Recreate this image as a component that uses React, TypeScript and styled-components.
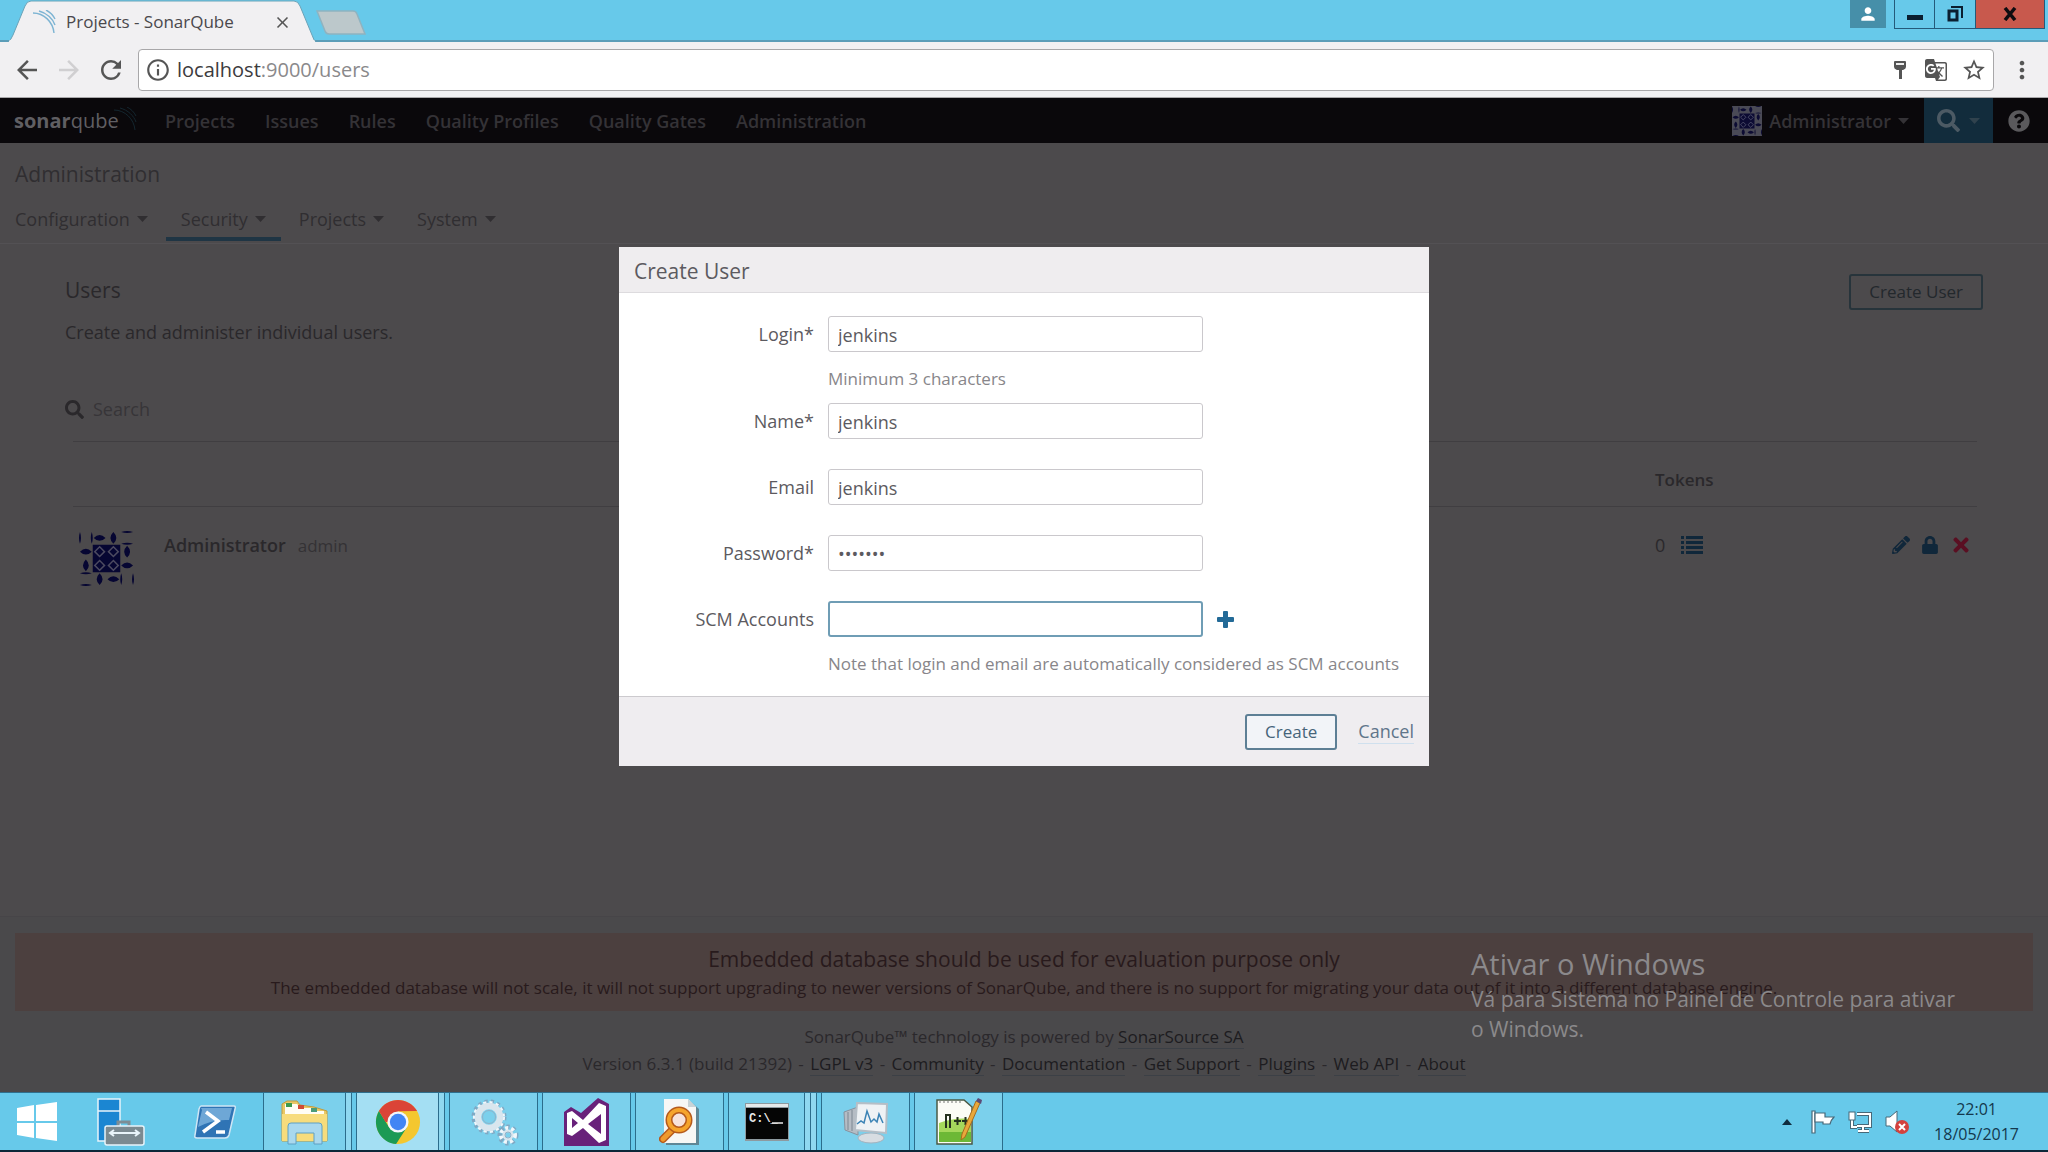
import React from 'react';
import styled, { createGlobalStyle, css } from 'styled-components';
import { FaLock, FaPencilAlt, FaQuestionCircle, FaSearch, FaTimes } from 'react-icons/fa';
import {
  MdArrowBack,
  MdArrowForward,
  MdClose,
  MdGTranslate,
  MdInfoOutline,
  MdMoreVert,
  MdPerson,
  MdRefresh,
  MdStarBorder,
} from 'react-icons/md';

const ui = "'Open Sans', 'Noto Sans', sans-serif";

const color = {
  sky: '#67c9ea',
  toolbar: '#f1f0f2',
  page: '#4c4a4c',
  footer: '#4a494b',
  ink: '#2a282b',
  faint: '#343235',
  navy: '#10273a',
};

const GlobalStyle = createGlobalStyle`
  *, *::before, *::after { box-sizing: border-box; }
  body { margin: 0; font-family: ${ui}; font-size: 18px; line-height: 28px; }
  h1, h2, h3, p { margin: 0; font-weight: 400; }
  button, input { font: inherit; margin: 0; }
  button { padding: 0; border: 0; background: none; color: inherit; }
  a { color: inherit; text-decoration: none; }
  svg { display: block; flex: none; }
`;

const Screen = styled.div`
  display: flex;
  flex-direction: column;
  min-height: 100vh;
`;

/* ---------- browser window ---------- */

const TabStrip = styled.header`
  display: flex;
  align-items: flex-end;
  height: 42px;
  padding-left: 8px;
  background: ${color.sky};
  box-shadow: inset 0 -2px 0 #5b9db8;
`;

const Tab = styled.div`
  position: relative;
  display: flex;
  align-items: center;
  width: 308px;
  height: 42px;
  padding: 2px 24px 0;
`;

const TabShape = styled.svg`
  position: absolute;
  inset: 0;
`;

const TabLabel = styled.div`
  position: relative;
  display: flex;
  flex: 1;
  align-items: center;
  gap: 10px;
  color: #4a484c;
  font-size: 17px;
`;

const TabClose = styled.button`
  margin-left: auto;
  color: #555;
`;

const NewTab = styled.button`
  align-self: flex-start;
  margin-top: 10px;
`;

const WindowControls = styled.div`
  display: flex;
  align-items: flex-start;
  align-self: flex-start;
  margin-left: auto;
  padding-right: 3px;
`;

const ProfileButton = styled.button`
  display: grid;
  place-items: center;
  width: 36px;
  height: 28px;
  margin-right: 8px;
  background: #468fa9;
  color: #fff;
`;

const WindowButton = styled.button<{ $close?: boolean }>`
  display: grid;
  place-items: center;
  width: ${(p) => (p.$close ? 69 : 41)}px;
  height: 29px;
  border: solid #245a7a;
  border-width: 0 1px 1px 0;
  background: ${(p) => (p.$close ? '#c8594d' : 'transparent')};
  &:nth-of-type(2) { border-left-width: 1px; }
`;

const Toolbar = styled.div`
  display: flex;
  align-items: center;
  height: 56px;
  padding: 0 12px;
  background: ${color.toolbar};
  border-bottom: 1px solid #a9a8aa;
  color: #555;
`;

const ToolButton = styled.button<{ $muted?: boolean }>`
  display: grid;
  place-items: center;
  width: 42px;
  color: ${(p) => (p.$muted ? '#d0cfd1' : '#555')};
  &:first-child { width: 30px; margin-right: 6px; }
`;

const Omnibox = styled.div`
  display: flex;
  flex: 1;
  align-items: center;
  gap: 6px;
  height: 42px;
  margin: 0 14px 0 6px;
  padding: 0 6px;
  border: 1px solid #a8a7a9;
  border-radius: 4px;
  background: #fff;
`;

const Address = styled.span`
  flex: 1;
  color: #8a898b;
  font-size: 20px;
`;

const Host = styled.span`
  color: #3c3b3d;
`;

const OmniIcons = styled.div`
  display: flex;
  align-items: center;
  gap: 13px;
`;

/* ---------- SonarQube page ---------- */

const Page = styled.div`
  position: relative;
  display: flex;
  flex: 1;
  flex-direction: column;
  background: ${color.page};
  color: ${color.ink};
`;

const GlobalNav = styled.nav`
  display: flex;
  align-items: center;
  height: 45px;
  background: #0a080b;
  color: #343236;
  font-weight: 600;
`;

const Logo = styled.a`
  display: flex;
  width: 150px;
  padding-left: 14px;
  color: #605f63;
  font-size: 20px;
  font-weight: 400;
`;

const LogoBold = styled.b`
  font-weight: 700;
`;

const LogoMark = styled.span`
  margin-left: -6px;
`;

const NavLink = styled.a`
  padding: 0 15px;
`;

const NavRight = styled.div`
  display: flex;
  align-items: center;
  align-self: stretch;
  margin-left: auto;
`;

const UserMenu = styled.button`
  display: flex;
  align-items: center;
  gap: 7px;
  margin-right: 15px;
`;

const SearchMenu = styled.button`
  display: flex;
  align-items: center;
  align-self: stretch;
  gap: 9px;
  width: 69px;
  padding-left: 13px;
  background: #122c3c;
  color: #4c5a64;
`;

const HelpButton = styled.button`
  width: 55px;
  padding-left: 15px;
  color: #5a595c;
`;

const ContextNav = styled.nav`
  padding-top: 16px;
  border-bottom: 1px solid #535154;
`;

const ContextTitle = styled.h1`
  padding-left: 15px;
  color: #302e31;
  font-size: 21px;
  line-height: 30px;
`;

const TabRow = styled.div`
  display: flex;
  gap: 3px;
  padding: 11px 0 2px;
`;

const MenuTab = styled.button<{ $active?: boolean }>`
  display: flex;
  align-items: center;
  gap: 7px;
  height: 41px;
  padding: 0 15px;
  border-bottom: 4px solid ${(p) => (p.$active ? '#1f3544' : 'transparent')};
  color: #302e31;
`;

const Main = styled.main`
  flex: 1;
  padding: 30px 65px 0;
`;

const PageHeader = styled.div`
  display: flex;
  justify-content: space-between;
  align-items: flex-start;
`;

const Heading = styled.h2`
  font-size: 21px;
  line-height: 32px;
`;

const Description = styled.p`
  margin-top: 8px;
`;

const Button = styled.button<{ $dim?: boolean }>`
  height: 36px;
  padding: 0 18px;
  border: 2px solid ${(p) => (p.$dim ? '#27343b' : '#5d7f95')};
  border-radius: 3px;
  background: ${(p) => (p.$dim ? 'transparent' : '#f2f4f8')};
  color: ${(p) => (p.$dim ? '#23282c' : '#46647a')};
  font-size: 17px;
  font-weight: 500;
  line-height: 32px;
`;

const SearchRow = styled.label`
  display: flex;
  align-items: center;
  gap: 9px;
  margin-top: 49px;
`;

const SearchInput = styled.input`
  flex: 1;
  height: 28px;
  padding: 0;
  border: 0;
  outline: 0;
  background: transparent;
  font-size: 18px;
  &::placeholder { color: #373538; opacity: 1; }
`;

const TableWrap = styled.div`
  margin: 18px 6px 0 8px;
`;

const Table = styled.table`
  width: 100%;
  border-collapse: collapse;
  border-top: 1px solid #403e41;
  text-align: left;
  th { padding: 24px 8px 12px; border-bottom: 1px solid #403e41; font-size: 17px; font-weight: 600; }
  td { padding: 24px 8px 0; vertical-align: top; }
  td:first-child { width: 83px; padding-left: 6px; }
  th:nth-child(3) { width: 218px; }
  td:last-child { width: 112px; padding-right: 5px; }
`;

const UserName = styled.strong`
  font-weight: 600;
`;

const UserLogin = styled.span`
  margin-left: 12px;
  color: #343235;
  font-size: 17px;
`;

const CellIcons = styled.div<{ $gap: number; $end?: boolean }>`
  display: flex;
  align-items: center;
  justify-content: ${(p) => (p.$end ? 'flex-end' : 'flex-start')};
  gap: ${(p) => p.$gap}px;
  height: 28px;
  color: ${color.navy};
`;

const Count = styled.span`
  color: ${color.ink};
`;

const DeleteButton = styled.button`
  color: #5a0f22;
`;

const Footer = styled.footer`
  padding: 16px 15px 15px;
  background: ${color.footer};
  text-align: center;
  font-size: 17px;
  line-height: 27px;
  border-top: 1px solid #474548;
`;

const Alert = styled.div`
  margin-bottom: 12px;
  padding: 11px 0 9px;
  background: #4c403f;
  color: #281a1c;
  line-height: 28px;
`;

const AlertTitle = styled.h3`
  font-size: 21px;
  line-height: 30px;
`;

const FootLink = styled.a`
  border-bottom: 1px solid #3c4046;
  color: #1d1c20;
`;

const Dash = styled.span`
  padding: 0 2px;
`;

/* ---------- dialog ---------- */

const Backdrop = styled.div`
  position: absolute;
  inset: 0;
  display: flex;
  justify-content: center;
  align-items: flex-start;
  padding-top: 149px;
`;

const Dialog = styled.form`
  width: 810px;
  background: #fff;
  color: #5c5a60;
`;

const DialogTitle = styled.h2`
  padding: 6px 15px 3px;
  border-bottom: 1px solid #dddbde;
  background: #efedef;
  font-size: 21px;
  line-height: 36px;
`;

const DialogBody = styled.div`
  padding: 23px 0 8px;
`;

const Field = styled.div`
  display: grid;
  grid-template-columns: 195px 375px auto;
  column-gap: 14px;
  justify-content: start;
  align-content: start;
  align-items: center;
  min-height: 66px;
  padding-bottom: 11px;
`;

const FieldLabel = styled.label`
  text-align: right;
`;

const TextInput = styled.input<{ $active?: boolean }>`
  width: 100%;
  height: 36px;
  padding: 2px 9px 0;
  border: 1px solid #cac8cc;
  border-radius: 3px;
  outline: 0;
  background: #fff;
  color: #5c5a60;
  ${(p) => p.$active && css`border: 2px solid #6f9db5;`}
`;

const AddButton = styled.button`
  color: #236a97;
`;

const Note = styled.p`
  grid-column: 2 / -1;
  width: 0;
  margin-top: 14px;
  color: #88868a;
  font-size: 17px;
  line-height: 26px;
  white-space: nowrap;
`;

const DialogFooter = styled.div`
  display: flex;
  justify-content: flex-end;
  align-items: center;
  gap: 21px;
  height: 70px;
  padding-right: 15px;
  border-top: 1px solid #cccace;
  background: #efedf0;
`;

const CancelLink = styled.a`
  border-bottom: 1px solid #cfe0ee;
  color: #60758a;
  line-height: 24px;
`;

const Watermark = styled.aside`
  position: absolute;
  right: 82px;
  bottom: 48px;
  width: 495px;
  color: #8b898b;
  font-size: 21px;
  line-height: 30px;
`;

const WatermarkTitle = styled.p`
  font-size: 29px;
  line-height: 40px;
`;

/* ---------- taskbar ---------- */

const Taskbar = styled.footer`
  display: flex;
  align-items: stretch;
  height: 60px;
  border-top: 1px solid #2f6f8d;
  border-bottom: 2px solid #0d2738;
  background: ${color.sky};
`;

const Launchers = styled.div`
  display: grid;
  grid-template-columns: 74px 94px 93px;
  width: 263px;
`;

const Launcher = styled.button`
  display: grid;
  place-items: center;
`;

const Slot = styled.div`
  display: flex;
  width: 93px;
  padding-right: 4px;
`;

const AppButton = styled.button<{ $current?: boolean }>`
  display: grid;
  flex: 1;
  place-items: center;
  border: solid #2b6d8c;
  border-width: 0 1px;
  background: ${(p) => (p.$current ? '#a4dff3' : '#7bd0ec')};
`;

const Sliver = styled.span`
  width: 6px;
  border-right: 1px solid #2b6d8c;
  background: #8fd8f0;
`;

const Tray = styled.div`
  display: flex;
  align-items: center;
  gap: 13px;
  margin-left: auto;
  padding-right: 29px;
`;

const Clock = styled.time`
  margin-left: 12px;
  color: #14384d;
  font-size: 16px;
  line-height: 25px;
  text-align: center;
`;

/* ---------- drawings ---------- */

const Caret = ({ fill = 'currentColor' }: { fill?: string }) => (
  <svg width="11" height="6" viewBox="0 0 11 6"><path d="M0 0h11L5.500 6Z" fill={fill} /></svg>
);

const Waves = ({ size, stroke, width = 1.4 }: { size: number; stroke: string; width?: number }) => (
  <svg width={size} height={size} viewBox="0 0 24 24" fill="none" stroke={stroke} strokeWidth={width}>
    <path d="M1 3C12 3 21 12 22 23" />
    <path d="M7 1C15 3 21 9 23 15" />
    <path d="M14 0c4 2 7 5 9 9" />
  </svg>
);

const Identicon = ({ size, ink, line, back }: { size: number; ink: string; line: string; back: string }) => {
  const h = (x: number, y: number, r = 3) => `M${x - 6} ${y}Q${x} ${y - r * 2} ${x + 6} ${y}Q${x} ${y + r * 2} ${x - 6} ${y}Z`;
  const v = (x: number, y: number, r = 3) => `M${x} ${y - 6}Q${x - r * 2} ${y} ${x} ${y + 6}Q${x + r * 2} ${y} ${x} ${y - 6}Z`;
  const leaves = [
    v(1, 7, 1), v(13, 7, 1), h(21, 7), v(35, 7), h(49, 1, 1), h(49, 13, 1),
    h(7, 21), v(49, 21), v(7, 35), h(7, 43, 1), h(49, 35),
    h(7, 55, 1), v(21, 49), h(35, 49), v(43, 49, 1), v(55, 49, 1),
  ].join('');
  return (
    <svg width={size} height={size} viewBox="0 0 56 56">
      <rect width="56" height="56" fill={back} />
      <path d={leaves} fill={ink} />
      <rect x="14" y="14" width="28" height="28" fill={ink} />
      {[21, 35].map((x) =>
        [21, 35].map((y) => (
          <path key={`${x}-${y}`} d={`M${x} ${y - 5}l5 5-5 5-5-5Z`} fill="none" stroke={line} strokeWidth="1.5" />
        )),
      )}
    </svg>
  );
};

const ListIcon = () => (
  <svg width="22" height="18" viewBox="0 0 22 18" fill="currentColor">
    {[0, 5, 10, 15].map((y) => (
      <path key={y} d={`M0 ${y}h3v3H0zM5 ${y}h17v3H5z`} />
    ))}
  </svg>
);

const PlusIcon = () => (
  <svg width="17" height="17" viewBox="0 0 17 17" fill="currentColor">
    <path d="M6 1q0-1 1-1h3q1 0 1 1v5h5q1 0 1 1v3q0 1-1 1h-5v5q0 1-1 1H7q-1 0-1-1v-5H1q-1 0-1-1V7q0-1 1-1h5z" />
  </svg>
);

const KeyIcon = () => (
  <svg width="22" height="20" viewBox="-4 0 22 20">
    <path d="M2 1h10q1 0 1 1v5q0 2-3 3H9v9H6v-9H4Q1 9 1 7V2q0-1 1-1Z" fill="#555" />
    <path d="M3 3h8v2H3z" fill="#eee" />
  </svg>
);

const WindowsIcon = () => (
  <svg width="42" height="40" viewBox="0 0 42 40" fill="#fff">
    <path d="M1 6l17-3v16H1zM20 3l21-3v19H20zM1 21h17v15L1 33zM20 21h21v18l-21-3z" />
  </svg>
);

const ServerIcon = () => (
  <svg width="50" height="50" viewBox="0 0 50 50" stroke="#e8f4fa" strokeWidth="1.5">
    <path d="M2 2h22v42H2zM2 14h22" fill="#1b86d2" />
    <path d="M22 29v-4h11v4" fill="none" stroke="#7d8d95" strokeWidth="3" />
    <rect x="9" y="29" width="39" height="19" rx="2" fill="#7b8a91" />
    <path d="M15 36h27M18 33l-4 3 4 3M39 33l4 3-4 3" fill="none" strokeWidth="2" />
  </svg>
);

const PowerShellIcon = () => (
  <svg width="44" height="36" viewBox="0 0 44 36">
    <path d="M8 2h33q2 0 1 3l-6 26q-1 3-4 3H4q-3 0-2-3L6 5q1-3 2-3Z" fill="#2f74b5" stroke="#cfe6f5" strokeWidth="1.5" />
    <path d="M8 4h31l-3 12Q20 15 5 23L9 6Z" fill="#6ea7d6" />
    <path d="M13 8l12 9-15 11M23 28h9" fill="none" stroke="#fff" strokeWidth="3.5" />
  </svg>
);

const ExplorerIcon = () => (
  <svg width="50" height="48" viewBox="0 0 50 48">
    <path d="M2 6l5-3h10l3 4 14 2 13 4v30H2z" fill="#e9c865" stroke="#c09c3e" />
    <path d="M5 6h12l4 4h10l4 3h9v5H5z" fill="#fffdf3" />
    <path d="M6 5h6v4H6z" fill="#3c9a50" /><path d="M18 7h6v4h-6z" fill="#d14b35" /><path d="M31 10h6v4h-6z" fill="#4a9b7a" />
    <path d="M2 16h45v27H2z" fill="#f7dc7c" />
    <path d="M8 28q0-3 3-3h28q3 0 3 3v18h-8V35H16v11H8z" fill="#a9d8ee" stroke="#5ea0c4" />
  </svg>
);

const ChromeIcon = () => (
  <svg width="46" height="46" viewBox="0 0 48 48">
    <circle cx="24" cy="24" r="23" fill="#f4c72f" />
    <path d="M24 24L4.100 12.500A23 23 0 0 1 43.900 12.500L24 13Z" fill="#db4437" />
    <path d="M4.100 12.500A23 23 0 0 0 22 47L33 30 15 30Z" fill="#1b9a55" />
    <path d="M24 13h19.900L34 24Z" fill="#f4c72f" />
    <path d="M4.100 12.500L24 13v11H11Z" fill="#db4437" />
    <circle cx="24" cy="24" r="11" fill="#f3f6fb" />
    <circle cx="24" cy="24" r="8.500" fill="#4285f4" />
  </svg>
);

const Gear = ({ x, y, r }: { x: number; y: number; r: number }) => (
  <g transform={`translate(${x} ${y})`} fill="none">
    <circle r={r + 2} stroke="#7fa9c4" strokeWidth="5" strokeDasharray="3 3" />
    <circle r={r + 1} stroke="#f1f7fb" strokeWidth="4" strokeDasharray="3 3" />
    <circle r={r - 2} stroke="#d9e6ee" strokeWidth={r / 2} />
    <circle r={r / 2} stroke="#8fb2c9" />
  </g>
);

const GearsIcon = () => (
  <svg width="50" height="50" viewBox="0 0 50 50">
    <Gear x={20} y={20} r={13} />
    <Gear x={39} y={38} r={6} />
  </svg>
);

const VisualStudioIcon = () => (
  <svg width="46" height="48" viewBox="0 0 46 48">
    <path d="M0 14l7-5 10 6L34 0l11 6v42H0z" fill="#68217a" />
    <path d="M3 15l5-2 11 9L35 5l7 3v34l-7 3-16-15-11 8-5-2zM8 20v10l6-5zM37 16L24 26l13 10z" fill="#fff" fillRule="evenodd" />
  </svg>
);

const FinderIcon = () => (
  <svg width="42" height="48" viewBox="0 0 42 48">
    <path d="M7 3h24l9 8v36H7z" fill="#5f8796" />
    <path d="M5 1h24l8 8v36H5z" fill="#f7f7f5" />
    <path d="M29 1v8h8z" fill="#c9d3d6" />
    <path d="M13 32L4 41" stroke="#b55a1c" strokeWidth="8" strokeLinecap="round" />
    <path d="M13 32L4 41" stroke="#f09a2c" strokeWidth="5" strokeLinecap="round" />
    <circle cx="20" cy="22" r="10" fill="#f7e3dc" stroke="#b55a1c" strokeWidth="7" />
    <circle cx="20" cy="22" r="10" fill="none" stroke="#f5a42c" strokeWidth="4" />
  </svg>
);

const PromptIcon = () => (
  <svg width="44" height="38" viewBox="0 0 44 38">
    <rect width="44" height="38" fill="#8d9aa0" />
    <rect x="1" y="1" width="42" height="3" fill="#e5e9ea" />
    <rect x="1" y="5" width="42" height="31" fill="#050505" />
    <text x="4" y="19" fill="#e8e8e8" fontFamily="'Liberation Mono', monospace" fontWeight="700" fontSize="12">C:\_</text>
    <path d="M27 20h11" stroke="#e8e8e8" strokeWidth="1.500" />
  </svg>
);

const MonitorIcon = () => (
  <svg width="48" height="44" viewBox="0 0 48 44">
    <path d="M2 12l14-5v28L3 30z" fill="#b5bcc4" stroke="#87929e" />
    <path d="M6 12v18M10 10v21" stroke="#7c8792" />
    <ellipse cx="29" cy="38" rx="13" ry="5" fill="#d7dde2" stroke="#a3b3bf" />
    <path d="M15 3l30 1-1 29-31-3z" fill="#eef2f5" stroke="#b5bec6" strokeWidth="2" />
    <path d="M15 24l4-3 3 2 3-12 4 11 3-3 3 3 2-8 4 9" fill="none" stroke="#3b83b5" strokeWidth="1.500" />
  </svg>
);

const NotepadIcon = () => (
  <svg width="48" height="50" viewBox="0 0 48 50">
    <path d="M2 3h27l8 7v37H2z" fill="#fbfcf6" stroke="#4a5a45" strokeWidth="1.500" />
    <path d="M4 5h24" stroke="#777" strokeDasharray="2 2" />
    <path d="M4 26q16-6 32-4v23H4z" fill="#a5d85c" />
    <path d="M4 35h32v10H4z" fill="#6cb836" />
    <path d="M11 31V18h4v13M19 24h7M22.500 20v8M27 24h7M30.500 20v8" fill="none" stroke="#26331f" strokeWidth="2" />
    <path d="M41 4l4 2-15 34-4 3 1-6z" fill="#e9a83b" stroke="#a86c1d" />
    <path d="M41 4l2-3 4 2-1 4z" fill="#5a4a78" />
  </svg>
);

const FlagIcon = () => (
  <svg width="24" height="24" viewBox="0 0 24 24" fill="#fff" stroke="#476878" strokeWidth="1.200">
    <path d="M1 1h3v22H1z" />
    <path d="M4 3h10v4h9q-3 3-4 7h-7v-2H4z" />
  </svg>
);

const NetworkIcon = () => (
  <svg width="24" height="24" viewBox="0 0 24 24" fill="none">
    <path d="M9 4h13v12H9M15 16v5M10 21h11M4 9v8h5" stroke="#476878" strokeWidth="4" />
    <path d="M9 4h13v12H9M15 16v5M10 21h11M4 9v8h5" stroke="#fff" strokeWidth="2" />
    <rect x="1" y="2" width="6" height="8" fill="#fff" stroke="#476878" />
  </svg>
);

const SpeakerIcon = () => (
  <svg width="24" height="24" viewBox="0 0 24 24">
    <path d="M1 7h4l7-6v21l-7-6H1z" fill="#fff" stroke="#476878" />
    <circle cx="17" cy="17" r="7" fill="#d3413d" />
    <path d="M14 14l6 6M20 14l-6 6" stroke="#fff" strokeWidth="2" />
  </svg>
);

/* ---------- data ---------- */

const navLinks = ['Projects', 'Issues', 'Rules', 'Quality Profiles', 'Quality Gates', 'Administration'];
const contextTabs = ['Configuration', 'Security', 'Projects', 'System'];
const footLinks = ['LGPL v3', 'Community', 'Documentation', 'Get Support', 'Plugins', 'Web API', 'About'];

const fields = [
  { id: 'login', label: 'Login*', type: 'text', value: 'jenkins', note: 'Minimum 3 characters' },
  { id: 'name', label: 'Name*', type: 'text', value: 'jenkins' },
  { id: 'email', label: 'Email', type: 'text', value: 'jenkins' },
  { id: 'password', label: 'Password*', type: 'password', value: 'jenkins' },
  {
    id: 'scm',
    label: 'SCM Accounts',
    type: 'text',
    value: '',
    active: true,
    note: 'Note that login and email are automatically considered as SCM accounts',
  },
];

const apps = [
  { name: 'File Explorer', icon: <ExplorerIcon />, stack: 1 },
  { name: 'Google Chrome', icon: <ChromeIcon />, stack: 1, current: true },
  { name: 'Services', icon: <GearsIcon />, stack: 0 },
  { name: 'Visual Studio', icon: <VisualStudioIcon />, stack: 0 },
  { name: 'Search', icon: <FinderIcon />, stack: 0 },
  { name: 'Command Prompt', icon: <PromptIcon />, stack: 2 },
  { name: 'Resource Monitor', icon: <MonitorIcon />, stack: 0 },
  { name: 'Notepad++', icon: <NotepadIcon />, stack: 0 },
];

export default function App() {
  return (
    <Screen>
      <GlobalStyle />
      <TabStrip>
        <Tab>
          <TabShape width="308" height="42" viewBox="0 0 308 42">
            <path d="M0 42Q3 40 5 35L17 6Q19 1 23 1H286Q290 1 292 6L304 35Q306 41 308 42Z" fill={color.toolbar} stroke="#6ba3b8" />
            <path d="M1 42h306" stroke={color.toolbar} strokeWidth="3" />
          </TabShape>
          <TabLabel>
            <Waves size={24} stroke="#7db4d3" />
            Projects - SonarQube
            <TabClose aria-label="Close tab"><MdClose size={19} /></TabClose>
          </TabLabel>
        </Tab>
        <NewTab aria-label="New tab">
          <svg width="52" height="26" viewBox="0 0 52 26">
            <path d="M1 1h36q3 0 4 3l8 20H13q-3 0-4-3Z" fill="#bcc8cb" stroke="#8fb3c0" strokeWidth="1.500" />
          </svg>
        </NewTab>
        <WindowControls>
          <ProfileButton aria-label="Profile"><MdPerson size={20} /></ProfileButton>
          <WindowButton aria-label="Minimize">
            <svg width="16" height="16" viewBox="0 0 16 16"><path d="M0 9h16v5H0z" fill="#0b1f30" /></svg>
          </WindowButton>
          <WindowButton aria-label="Restore">
            <svg width="16" height="16" viewBox="0 0 16 16" fill="none" stroke="#0b1f30">
              <path d="M2 5h8v9H2z" strokeWidth="3" /><path d="M4 1h11v11" strokeWidth="2" />
            </svg>
          </WindowButton>
          <WindowButton $close aria-label="Close">
            <svg width="14" height="14" viewBox="0 0 14 14"><path d="M2 1l10 12M12 1L2 13" stroke="#0f0c10" strokeWidth="3.500" /></svg>
          </WindowButton>
        </WindowControls>
      </TabStrip>
      <Toolbar>
        <ToolButton aria-label="Back"><MdArrowBack size={30} /></ToolButton>
        <ToolButton $muted aria-label="Forward"><MdArrowForward size={30} /></ToolButton>
        <ToolButton aria-label="Reload"><MdRefresh size={30} /></ToolButton>
        <Omnibox>
          <MdInfoOutline size={26} />
          <Address><Host>localhost</Host>:9000/users</Address>
          <OmniIcons>
            <KeyIcon />
            <MdGTranslate size={24} />
            <MdStarBorder size={26} />
          </OmniIcons>
        </Omnibox>
        <MdMoreVert size={28} />
      </Toolbar>

      <Page>
        <GlobalNav>
          <Logo href="#home">
            <span><LogoBold>sonar</LogoBold>qube</span>
            <LogoMark><Waves size={24} stroke="#14262f" width={1} /></LogoMark>
          </Logo>
          {navLinks.map((link) => <NavLink key={link} href="#nav">{link}</NavLink>)}
          <NavRight>
            <UserMenu>
              <Identicon size={30} ink="#0c0b33" line="#565872" back="#4a4a56" />
              Administrator
              <Caret />
            </UserMenu>
            <SearchMenu aria-label="Search">
              <FaSearch size={23} />
              <Caret fill="#30424d" />
            </SearchMenu>
            <HelpButton aria-label="Help"><FaQuestionCircle size={22} /></HelpButton>
          </NavRight>
        </GlobalNav>
        <ContextNav>
          <ContextTitle>Administration</ContextTitle>
          <TabRow>
            {contextTabs.map((tab) => (
              <MenuTab key={tab} $active={tab === 'Security'}>
                {tab}
                <Caret />
              </MenuTab>
            ))}
          </TabRow>
        </ContextNav>

        <Main>
          <PageHeader>
            <Heading>Users</Heading>
            <Button $dim>Create User</Button>
          </PageHeader>
          <Description>Create and administer individual users.</Description>
          <SearchRow>
            <FaSearch size={19} aria-hidden />
            <SearchInput type="search" placeholder="Search" aria-label="Search" />
          </SearchRow>
          <TableWrap>
            <Table>
              <thead>
                <tr><th /><th /><th>Tokens</th><th /></tr>
              </thead>
              <tbody>
                <tr>
                  <td><Identicon size={55} ink="#060632" line="#4c4a60" back={color.page} /></td>
                  <td><UserName>Administrator</UserName><UserLogin>admin</UserLogin></td>
                  <td>
                    <CellIcons $gap={16}>
                      <Count>0</Count>
                      <button aria-label="Tokens"><ListIcon /></button>
                    </CellIcons>
                  </td>
                  <td>
                    <CellIcons $gap={11} $end>
                      <button aria-label="Edit"><FaPencilAlt size={18} /></button>
                      <button aria-label="Change password"><FaLock size={18} /></button>
                      <DeleteButton aria-label="Deactivate"><FaTimes size={22} /></DeleteButton>
                    </CellIcons>
                  </td>
                </tr>
              </tbody>
            </Table>
          </TableWrap>
        </Main>

        <Footer>
          <Alert>
            <AlertTitle>Embedded database should be used for evaluation purpose only</AlertTitle>
            <p>
              The embedded database will not scale, it will not support upgrading to newer versions of SonarQube, and
              there is no support for migrating your data out of it into a different database engine.
            </p>
          </Alert>
          <p>SonarQube™ technology is powered by <FootLink href="#sonarsource">SonarSource SA</FootLink></p>
          <p>
            Version 6.3.1 (build 21392)
            {footLinks.map((link) => (
              <React.Fragment key={link}> <Dash>-</Dash> <FootLink href="#foot">{link}</FootLink></React.Fragment>
            ))}
          </p>
        </Footer>

        <Backdrop>
          <Dialog role="dialog" aria-labelledby="dialog-title">
            <DialogTitle id="dialog-title">Create User</DialogTitle>
            <DialogBody>
              {fields.map((f) => (
                <Field key={f.id}>
                  <FieldLabel htmlFor={f.id}>{f.label}</FieldLabel>
                  <TextInput id={f.id} type={f.type} defaultValue={f.value} $active={f.active} autoComplete="off" />
                  {f.active && <AddButton type="button" aria-label="Add SCM account"><PlusIcon /></AddButton>}
                  {f.note && <Note>{f.note}</Note>}
                </Field>
              ))}
            </DialogBody>
            <DialogFooter>
              <Button type="button">Create</Button>
              <CancelLink href="#cancel">Cancel</CancelLink>
            </DialogFooter>
          </Dialog>
        </Backdrop>

        <Watermark>
          <WatermarkTitle>Ativar o Windows</WatermarkTitle>
          <p>Vá para Sistema no Painel de Controle para ativar o Windows.</p>
        </Watermark>
      </Page>

      <Taskbar>
        <Launchers>
          <Launcher aria-label="Start"><WindowsIcon /></Launcher>
          <Launcher aria-label="Server Manager"><ServerIcon /></Launcher>
          <Launcher aria-label="PowerShell"><PowerShellIcon /></Launcher>
        </Launchers>
        {apps.map((app) => (
          <Slot key={app.name}>
            <AppButton $current={app.current} aria-label={app.name}>{app.icon}</AppButton>
            {Array.from({ length: app.stack }, (_, i) => <Sliver key={i} />)}
          </Slot>
        ))}
        <Tray>
          <svg width="16" height="6" viewBox="0 0 16 6"><path d="M5 0l5 6H0z" fill="#0f2c3f" /></svg>
          <FlagIcon />
          <NetworkIcon />
          <SpeakerIcon />
          <Clock>22:01<br />18/05/2017</Clock>
        </Tray>
      </Taskbar>
    </Screen>
  );
}
